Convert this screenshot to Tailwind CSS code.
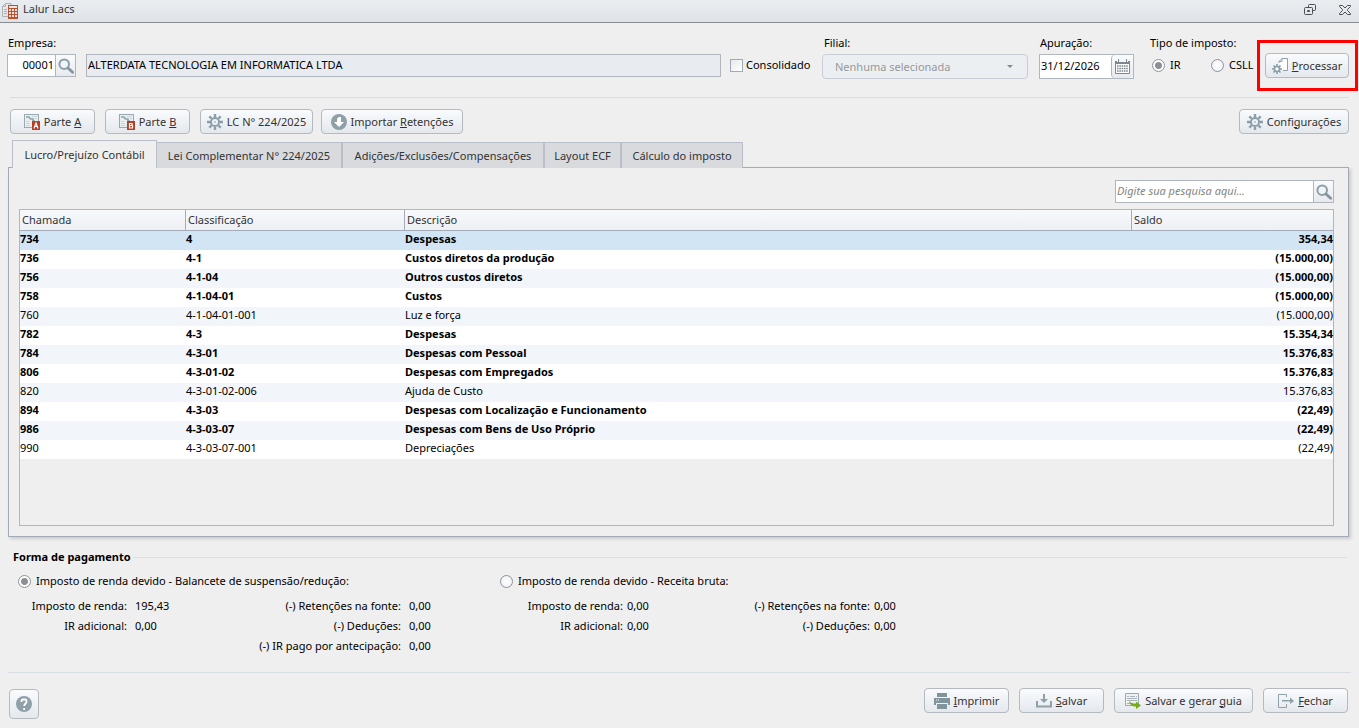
<!DOCTYPE html>
<html lang="pt-BR">
<head>
<meta charset="utf-8">
<meta name="viewport" content="width=device-width, initial-scale=1">
<title>Lalur Lacs</title>
<script src="https://cdn.jsdelivr.net/npm/@tailwindcss/browser@4"></script>
</head>
<body class="flex min-h-screen flex-col bg-[#efefef] font-['Noto_Sans','Open_Sans',sans-serif] text-[11px] leading-4 text-black">

<svg class="hidden" aria-hidden="true">
  <symbol id="lens" viewBox="0 0 16 16">
    <circle cx="6.2" cy="6.2" r="4.8" fill="#eef5f8" stroke="#8e9ea6" stroke-width="2"/>
    <path d="M10 10l4.600 4.200" stroke="#84949c" stroke-width="2.800" stroke-linecap="round"/>
  </symbol>
  <symbol id="gear" viewBox="0 0 16 16">
    <g stroke="#8a9ea8" stroke-width="2.4"><path d="M8 0v3M8 13v3M0 8h3M13 8h3M2.3 2.3l2.2 2.2M11.5 11.5l2.2 2.2M2.3 13.7l2.2-2.2M11.5 4.5l2.2-2.2"/></g>
    <circle cx="8" cy="8" r="4.1" fill="none" stroke="#8a9ea8" stroke-width="2"/>
    <circle cx="8" cy="8" r="1.1" fill="#b4c1c7"/>
  </symbol>
  <symbol id="sheet" viewBox="0 0 16 16">
    <rect x="0.5" y="0.5" width="14" height="13" fill="#e9eef0" stroke="#9aa9af"/>
    <path d="M2 3h3l1.500 2H9v2h2" fill="none" stroke="#8fa2a9" stroke-width="1.6"/>
    <path d="M8 2.500h5M11 4.500h2M2 7.500h3M2 9.500h4M2 11.500h4" stroke="#cbd4d8"/>
  </symbol>
</svg>

<header class="flex h-[23px] items-center gap-[5px] border-b border-[#858b91] bg-linear-to-b from-[#eaedf0] to-[#dfe3e8] pl-[2px] pr-2 text-[#333333]">
  <svg class="h-4 w-4" viewBox="0 0 16 16" aria-hidden="true">
    <path d="M.5 13.500V3.500L3.500 .5H9V3M.5 13.500H6M3.500 .5v3h-3M2 6.500h3M2 8.500h3M2 10.500h3" fill="none" stroke="#a8b2b8"/>
    <rect x="6" y="2" width="10" height="14" fill="#b9532f"/>
    <path d="M7 3h8v2H7zM7 6h2v2H7zM10 6h2v2h-2zM13 6h2v2h-2zM7 9h2v2H7zM10 9h2v2h-2zM13 9h2v2h-2zM7 12h2v2H7zM10 12h2v2h-2zM13 12h2v2h-2z" fill="#f6e3db"/>
  </svg>
  <h1 class="flex-1 pb-1">Lalur Lacs</h1>
  <button type="button" aria-label="Restaurar" class="mr-[18px] pb-[3px]">
    <svg class="h-3 w-3" viewBox="0 0 12 12" fill="none" stroke="#4b4f54" aria-hidden="true"><path d="M4.500 3.500V1.500a1 1 0 011-1h5a1 1 0 011 1v4a1 1 0 01-1 1H8.500M1.500 3.500h6a1 1 0 011 1v5a1 1 0 01-1 1h-6a1 1 0 01-1-1v-5a1 1 0 011-1zM3.500 6.500h2v1h-2z"/></svg>
  </button>
  <button type="button" aria-label="Fechar janela" class="pb-[3px]">
    <svg class="h-3 w-3" viewBox="0 0 12 12" fill="none" stroke="#4b4f54" aria-hidden="true"><path d="M.5 1.500h3L6 4l2.500-2.500h3v1L8.500 5.500v1l3 3v1h-3L6 8l-2.500 2.500h-3v-1l3-3v-1l-3-3z"/></svg>
  </button>
</header>

<form class="flex gap-[9px] pl-[7px] pr-[10px] pt-3">
  <div class="flex flex-1 gap-[10px]">
    <div>
      <label for="empresa" class="block h-[19px] pl-px">Empresa:</label>
      <div class="flex h-[23px] border border-[#b0b6be] bg-white">
        <input id="empresa" value="00001" class="w-[47px] bg-white pb-[2px] pr-px text-right">
        <button type="button" aria-label="Buscar empresa" class="flex w-5 items-center justify-center border-l border-[#b0b6be] bg-linear-to-b from-[#fafbfc] to-[#e6eaef]"><svg class="h-4 w-4"><use href="#lens"/></svg></button>
      </div>
    </div>
    <div class="flex-1 pt-[19px]">
      <input aria-label="Nome da empresa" readonly value="ALTERDATA TECNOLOGIA EM INFORMATICA LTDA" class="h-[23px] w-full border border-[#b0b6be] bg-[#e8ebf0] px-px pb-[2px]">
    </div>
  </div>
  <label class="flex h-fit w-[83px] items-center gap-[3px] pt-[22px]">
    <input type="checkbox" class="h-[13px] w-[13px] shrink-0 appearance-none border border-[#a3a8b8] bg-linear-to-br from-[#e6e9ec] to-white">Consolidado
  </label>
  <div class="w-[206px]">
    <label for="filial" class="block h-[19px] pl-[2px]">Filial:</label>
    <div class="relative">
      <select id="filial" disabled class="h-[25px] w-full appearance-none rounded-sm border border-[#c9ced6] bg-[#ebeff2] px-3 text-[#98999b]"><option>Nenhuma selecionada</option></select>
      <svg class="absolute right-[15px] top-[11px] h-[3px] w-[6px]" viewBox="0 0 6 3" aria-hidden="true"><path d="M0 0h6L3 3z" fill="#85898d"/></svg>
    </div>
  </div>
  <div class="ml-[2px]">
    <label for="apuracao" class="block h-[19px] pl-px">Apuração:</label>
    <div class="flex h-[25px] border border-[#b0b6be] bg-white">
      <input id="apuracao" value="31/12/2026" class="w-[71px] pb-[2px] pl-px">
      <button type="button" aria-label="Abrir calendário" class="flex w-[22px] items-center justify-center rounded-sm border-l border-[#b0b6be] bg-linear-to-b from-[#fafbfc] to-[#e6eaef]">
        <svg class="h-[15px] w-[15px]" viewBox="0 0 15 15" aria-hidden="true"><path d="M.5 3.500v11h14v-11" fill="#fff" stroke="#7d878d"/><path d="M0 2h2v1h1V0h1v3h7V0h1v3h1V2h2v3H0z" fill="#7d878d"/><path d="M2 7h11M2 9.500h11M2 12h11" stroke="#7d878d" stroke-width="1.6" stroke-dasharray="1.6 .7"/></svg>
      </button>
    </div>
  </div>
  <fieldset class="ml-[7px] w-[106px]">
    <legend class="h-[19px] whitespace-nowrap">Tipo de imposto:</legend>
    <div class="flex pl-[2px] pt-[3px]">
      <label class="flex w-[59px] items-center gap-[5px]"><input type="radio" name="tipo" checked class="h-[13px] w-[13px] appearance-none rounded-full border border-[#8d939b] bg-radial from-white to-[#eceef1] checked:bg-[radial-gradient(circle,#8b8f95_0_3px,#ffffff_4px)]">IR</label>
      <label class="flex items-center gap-[5px]"><input type="radio" name="tipo" class="h-[13px] w-[13px] appearance-none rounded-full border border-[#8d939b] bg-radial from-white to-[#eceef1] checked:bg-[radial-gradient(circle,#8b8f95_0_3px,#ffffff_4px)]">CSLL</label>
    </div>
  </fieldset>
  <div class="relative mt-[18px] h-[25px] w-[84px]">
    <div class="pointer-events-none absolute -bottom-[13px] -left-2 -right-[9px] -top-[13px] border-3 border-[#ff0000]"></div>
    <button type="button" class="flex h-[25px] w-full items-center justify-center gap-1 rounded-sm border border-[#b5bac0] bg-linear-to-b from-[#f9fbfd] to-[#e4e8ed] text-[#333333]">
      <svg class="h-4 w-4" viewBox="0 0 16 16" aria-hidden="true"><path d="M7 5V3.500L10 .5h5.500v12H11M10 .5v3H7" fill="#fff" stroke="#8fa0a8"/><g stroke="#8a9ea8" stroke-width="1.600"><path d="M5 6v10M0 11h10M1.500 7.500l7 7M1.500 14.500l7-7"/></g><circle cx="5" cy="11" r="2.500" fill="#fff" stroke="#8a9ea8" stroke-width="1.600"/></svg>
      <span><u>P</u>rocessar</span>
    </button>
  </div>
</form>

<hr class="mx-[10px] mt-[18px] border-[#d8dde3]">

<div class="flex gap-2 px-[10px] pt-[11px] text-[#333333]">
  <button type="button" class="mr-[2px] flex h-[25px] w-[85px] items-center justify-center gap-1 rounded-sm border border-[#b5bac0] bg-linear-to-b from-[#f9fbfd] to-[#e4e8ed]">
    <svg class="h-4 w-4" viewBox="0 0 16 16" aria-hidden="true"><use href="#sheet"/><rect x="8" y="7" width="8" height="9" fill="#b63f25"/><path d="M10 14.500l2-5.500 2 5.500M10.500 12.500h3" fill="none" stroke="#fff" stroke-width="1.200"/></svg>
    <span>Parte <u>A</u></span>
  </button>
  <button type="button" class="flex h-[25px] w-[85px] items-center justify-center gap-1 rounded-sm border border-[#b5bac0] bg-linear-to-b from-[#f9fbfd] to-[#e4e8ed]">
    <svg class="h-4 w-4" viewBox="0 0 16 16" aria-hidden="true"><use href="#sheet"/><rect x="8" y="7" width="8" height="9" fill="#b63f25"/><path d="M10.500 9.500H13v2h-2.500zM10.500 11.500h3v2.500h-3z" fill="none" stroke="#fff" stroke-width="1.200"/></svg>
    <span>Parte <u>B</u></span>
  </button>
  <button type="button" class="ml-[2px] flex h-[25px] w-[113px] items-center justify-center gap-1 whitespace-nowrap rounded-sm border border-[#b5bac0] bg-linear-to-b from-[#f9fbfd] to-[#e4e8ed]">
    <svg class="h-4 w-4 shrink-0" aria-hidden="true"><use href="#gear"/></svg>LC N° 224/2025
  </button>
  <button type="button" class="flex h-[25px] w-[142px] items-center justify-center gap-1 whitespace-nowrap rounded-sm border border-[#b5bac0] bg-linear-to-b from-[#f9fbfd] to-[#e4e8ed]">
    <svg class="h-4 w-4 shrink-0" viewBox="0 0 16 16" aria-hidden="true"><circle cx="8" cy="8" r="8" fill="#8fa0a9"/><path d="M10 3H8Q6 3.500 6 6v2H3l5 5 5-5h-3z" fill="#fff"/></svg>
    <span>Importar <u>R</u>etenções</span>
  </button>
  <button type="button" class="ml-auto flex h-[25px] w-[110px] items-center justify-center gap-1 rounded-sm border border-[#b5bac0] bg-linear-to-b from-[#f9fbfd] to-[#e4e8ed]">
    <svg class="h-4 w-4 shrink-0" aria-hidden="true"><use href="#gear"/></svg><span>Confi<u>g</u>urações</span>
  </button>
</div>

<main class="flex flex-1 flex-col px-2 pt-[6px]">
  <div role="tablist" class="z-10 -mb-px flex h-7 items-end pl-[4px] text-[#333333]">
    <button type="button" role="tab" aria-selected="true" class="h-7 w-[145px] whitespace-nowrap border-x border-t border-[#b9bec8] bg-[#efefef]">Lucro/Prejuízo Contábil</button>
    <button type="button" role="tab" class="h-[26px] w-[186px] whitespace-nowrap border-r-2 border-t border-[#b9bec8] bg-[#d8dade]">Lei Complementar N° 224/2025</button>
    <button type="button" role="tab" class="h-[26px] w-[202px] whitespace-nowrap border-r-2 border-t border-[#b9bec8] bg-[#d8dade]">Adições/Exclusões/Compensações</button>
    <button type="button" role="tab" class="h-[26px] w-[77px] whitespace-nowrap border-r-2 border-t border-[#b9bec8] bg-[#d8dade]">Layout ECF</button>
    <button type="button" role="tab" class="h-[26px] w-[121px] whitespace-nowrap border-r border-t border-[#b9bec8] bg-[#d8dade]">Cálculo do imposto</button>
  </div>
  <section class="mr-[2px] flex flex-1 flex-col border border-[#a3abb8] px-[10px] pb-[10px] pt-3 shadow-[2px_2px_3px_#00000026]">
    <div class="ml-auto mr-1 flex h-[23px] w-[219px] border border-[#b0b6be] bg-white">
      <input type="search" aria-label="Pesquisa" placeholder="Digite sua pesquisa aqui..." class="min-w-0 flex-1 px-px pb-[2px] italic placeholder:text-[#85857d]">
      <button type="button" aria-label="Pesquisar" class="flex w-5 items-center justify-center border-l border-[#b0b6be] bg-linear-to-b from-[#fafbfc] to-[#e6eaef]"><svg class="h-4 w-4"><use href="#lens"/></svg></button>
    </div>
    <div class="mr-1 mt-[6px] flex-1 border border-[#b0b6be]">
      <table class="w-full table-fixed border-separate border-spacing-0">
        <colgroup><col class="w-[166px]"><col class="w-[219px]"><col><col class="w-[201px]"></colgroup>
        <thead class="text-left text-[#333333]">
          <tr class="h-[21px] bg-linear-to-b from-[#f7f9fb] to-[#edf0f4] *:border-b *:border-[#a3abb8] *:p-0 *:pl-[2px] *:font-normal">
            <th class="border-r">Chamada</th><th class="border-r">Classificação</th><th class="border-r">Descrição</th><th>Saldo</th>
          </tr>
        </thead>
        <tbody id="linhas"></tbody>
      </table>
    </div>
  </section>
</main>

<fieldset class="mx-2 mt-3 h-[123px]">
  <div class="flex items-center gap-[2px] pl-[5px] pr-1"><h2 class="font-bold">Forma de pagamento</h2><hr class="flex-1 border-[#dcdee1]"></div>
  <div class="flex pl-[10px] pt-2">
    <div class="w-[482px]">
      <label class="flex items-center gap-[5px]"><input type="radio" name="forma" checked class="h-[13px] w-[13px] appearance-none rounded-full border border-[#8d939b] bg-radial from-white to-[#eceef1] checked:bg-[radial-gradient(circle,#8b8f95_0_3px,#ffffff_4px)]">Imposto de renda devido - Balancete de suspensão/redução:</label>
      <dl class="grid w-fit grid-cols-[109px_46px_212px_40px] gap-x-2 pt-[7px] leading-5">
        <dt class="text-right">Imposto de renda:</dt><dd>195,43</dd><dt class="text-right">(-) Retenções na fonte:</dt><dd>0,00</dd>
        <dt class="text-right">IR adicional:</dt><dd>0,00</dd><dt class="text-right">(-) Deduções:</dt><dd>0,00</dd>
        <dt class="col-start-3 text-right">(-) IR pago por antecipação:</dt><dd>0,00</dd>
      </dl>
    </div>
    <div>
      <label class="flex items-center gap-[5px]"><input type="radio" name="forma" class="h-[13px] w-[13px] appearance-none rounded-full border border-[#8d939b] bg-radial from-white to-[#eceef1] checked:bg-[radial-gradient(circle,#8b8f95_0_3px,#ffffff_4px)]">Imposto de renda devido - Receita bruta:</label>
      <dl class="grid w-fit grid-cols-[123px_40px_199px_40px] gap-x-1 pt-[7px] leading-5">
        <dt class="text-right">Imposto de renda:</dt><dd>0,00</dd><dt class="text-right">(-) Retenções na fonte:</dt><dd>0,00</dd>
        <dt class="text-right">IR adicional:</dt><dd>0,00</dd><dt class="text-right">(-) Deduções:</dt><dd>0,00</dd>
      </dl>
    </div>
  </div>
</fieldset>

<footer class="mx-2 border-t border-[#d8dde3] text-[#333333]">
  <div class="flex h-[55px] gap-[10px] px-px pr-[3px] pt-[15px]">
    <button type="button" aria-label="Ajuda" class="mr-auto mt-px flex h-[30px] w-[30px] items-center justify-center rounded-sm border border-[#b5bac0] bg-linear-to-b from-[#f9fbfd] to-[#e4e8ed]">
      <svg class="h-4 w-4" viewBox="0 0 16 16" aria-hidden="true"><circle cx="8" cy="8" r="8" fill="#8fa0a9"/><path d="M5.500 6V5a1.500 1.500 0 011.500-1.500h2A1.500 1.500 0 0110.500 5v1c0 1.500-2.300 1.700-2.300 4M8.200 12v2" fill="none" stroke="#fff" stroke-width="1.800"/></svg>
    </button>
    <button type="button" class="flex h-[25px] w-[85px] items-center justify-center gap-1 rounded-sm border border-[#b5bac0] bg-linear-to-b from-[#f9fbfd] to-[#e4e8ed]">
      <svg class="h-4 w-4" viewBox="0 0 16 16" aria-hidden="true"><path d="M3 0h10v4H3zM0 5h16v7h-2v-2H2v2H0zM3 11h10v5H3z" fill="#81939b"/><path d="M2 7h1M4 7h1" stroke="#fff"/></svg>
      <span><u>I</u>mprimir</span>
    </button>
    <button type="button" class="flex h-[25px] w-[85px] items-center justify-center gap-1 rounded-sm border border-[#b5bac0] bg-linear-to-b from-[#f9fbfd] to-[#e4e8ed]">
      <svg class="h-4 w-4" viewBox="0 0 16 16" aria-hidden="true"><path d="M1 8v5.500h14V8" fill="none" stroke="#8fa0a9" stroke-width="2"/><path d="M7 1h2v5h3L8 10 4 6h3z" fill="#8fa0a9"/></svg>
      <span><u>S</u>alvar</span>
    </button>
    <button type="button" class="flex h-[25px] w-[139px] items-center justify-center gap-1 whitespace-nowrap rounded-sm border border-[#b5bac0] bg-linear-to-b from-[#f9fbfd] to-[#e4e8ed]">
      <svg class="h-4 w-4 shrink-0" viewBox="0 0 16 16" aria-hidden="true"><path d="M.5.5h13v12H.5z" fill="#eef1f3" stroke="#9aa8af"/><path d="M2 3.500h2M5 3.500h5M11 3.500h1M2 5.500h10M2 7.500h10M2 10.500h3" stroke="#a9b5bb"/><path d="M4 8c1.500 2 4 2.500 7 2.500V8.500l5 4-5 3.500v-2.500c-4 0-6.500-2-7-5.500z" fill="#76ac1c"/></svg>
      <span>Salvar e gerar <u>g</u>uia</span>
    </button>
    <button type="button" class="flex h-[25px] w-[85px] items-center justify-center gap-1 rounded-sm border border-[#b5bac0] bg-linear-to-b from-[#f9fbfd] to-[#e4e8ed]">
      <svg class="h-4 w-4" viewBox="0 0 16 16" aria-hidden="true"><path d="M8.500 4V1.500h-8v13h8V11" fill="none" stroke="#8fa0a9"/><path d="M4 7h8V4.500L16 8l-4 3V8.500H4z" fill="#8fa0a9"/></svg>
      <span><u>F</u>echar</span>
    </button>
  </div>
</footer>

<script>
  const linhas = [
    ["734", "4", "Despesas", "354,34", 1],
    ["736", "4-1", "Custos diretos da produção", "(15.000,00)", 1],
    ["756", "4-1-04", "Outros custos diretos", "(15.000,00)", 1],
    ["758", "4-1-04-01", "Custos", "(15.000,00)", 1],
    ["760", "4-1-04-01-001", "Luz e força", "(15.000,00)", 0],
    ["782", "4-3", "Despesas", "15.354,34", 1],
    ["784", "4-3-01", "Despesas com Pessoal", "15.376,83", 1],
    ["806", "4-3-01-02", "Despesas com Empregados", "15.376,83", 1],
    ["820", "4-3-01-02-006", "Ajuda de Custo", "15.376,83", 0],
    ["894", "4-3-03", "Despesas com Localização e Funcionamento", "(22,49)", 1],
    ["986", "4-3-03-07", "Despesas com Bens de Uso Próprio", "(22,49)", 1],
    ["990", "4-3-03-07-001", "Depreciações", "(22,49)", 0]
  ];
  const corpo = document.getElementById("linhas");
  linhas.forEach((dados, i) => {
    const tr = corpo.insertRow();
    tr.className = (i === 0 ? "bg-[#d2e5f5]" : i % 2 ? "bg-white" : "bg-[#f2f5fa]") + (dados[4] ? " font-bold" : "");
    dados.slice(0, 4).forEach((texto, c) => {
      const td = tr.insertCell();
      td.className = c === 3 ? "h-[19px] p-0 pb-[3px] text-right" : "h-[19px] p-0 pb-[3px]";
      td.textContent = texto;
    });
  });
</script>
</body>
</html>
